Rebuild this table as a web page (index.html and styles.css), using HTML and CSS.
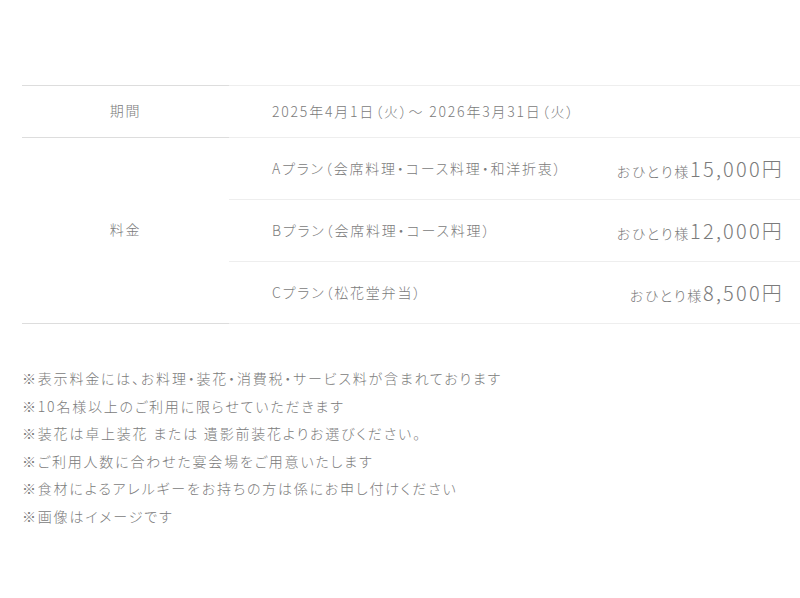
FILE: index.html
```html
<!DOCTYPE html>
<html lang="ja">
<head>
    <meta charset="UTF-8">
    <meta name="viewport" content="width=device-width, initial-scale=1.0">
    <title>プラン詳細</title>
    <link rel="stylesheet" href="styles.css">
</head>
<body>
    <div class="container">
        <div class="spec">
            <div class="spec-row">
                <div class="spec-label">期間</div>
                <div class="spec-body">
                    <div class="line">2025年4月1日（火）〜 2026年3月31日（火）</div>
                </div>
            </div>
            <div class="spec-row spec-last">
                <div class="spec-label">料金</div>
                <div class="spec-body">
                    <div class="line plan">
                        <span class="plan-name">Aプラン（会席料理・コース料理・和洋折衷）</span>
                        <span class="price">おひとり様<b>15,000円</b></span>
                    </div>
                    <div class="line plan">
                        <span class="plan-name">Bプラン（会席料理・コース料理）</span>
                        <span class="price">おひとり様<b>12,000円</b></span>
                    </div>
                    <div class="line plan">
                        <span class="plan-name">Cプラン（松花堂弁当）</span>
                        <span class="price">おひとり様<b>8,500円</b></span>
                    </div>
                </div>
            </div>
        </div>

        <ul class="notes">
            <li>※表示料金には、お料理・装花・消費税・サービス料が含まれております</li>
            <li>※10名様以上のご利用に限らせていただきます</li>
            <li>※装花は卓上装花 または 遺影前装花よりお選びください。</li>
            <li>※ご利用人数に合わせた宴会場をご用意いたします</li>
            <li>※食材によるアレルギーをお持ちの方は係にお申し付けください</li>
            <li>※画像はイメージです</li>
        </ul>
    </div>
</body>
</html>
```

FILE: styles.css
```css
body {
    margin: 0;
    padding: 0;
    background-color: #fff;
    color: #7b7b7b;
    font-family: "Noto Sans CJK JP", "Noto Sans", sans-serif;
    font-weight: 300;
    font-size: 14px;
    letter-spacing: 1.8px;
    font-feature-settings: "palt";
}
.container {
    padding: 85px 0 0 22px;
}
.spec {
    border-bottom: 1px solid #ddd;
}
.spec-row {
    display: flex;
}
.spec-label {
    width: 207px;
    flex-shrink: 0;
    display: flex;
    align-items: center;
    justify-content: center;
    padding-bottom: 3px;
    border-top: 1px solid #ddd;
}
.spec-body {
    flex: 1;
    background: #fff;
    margin-bottom: -1px; /* cover the dark rule under the right column */
}
.line {
    display: flex;
    align-items: center;
    justify-content: space-between;
    height: 49px;
    padding: 0 16px 3px 43px;
    border-top: 1px solid #eee;
}
.plan {
    height: 60px;
    padding-bottom: 1px;
}
.spec-last .spec-body {
    border-bottom: 1px solid #eee;
}
.price b {
    font-weight: 300;
    font-size: 20px;
    letter-spacing: 2.2px;
}
.price {
    font-size: 14px;
}
.notes {
    list-style: none;
    margin: 41px 0 0;
    padding: 0;
}
.notes li {
    line-height: 27.5px;
}
```
